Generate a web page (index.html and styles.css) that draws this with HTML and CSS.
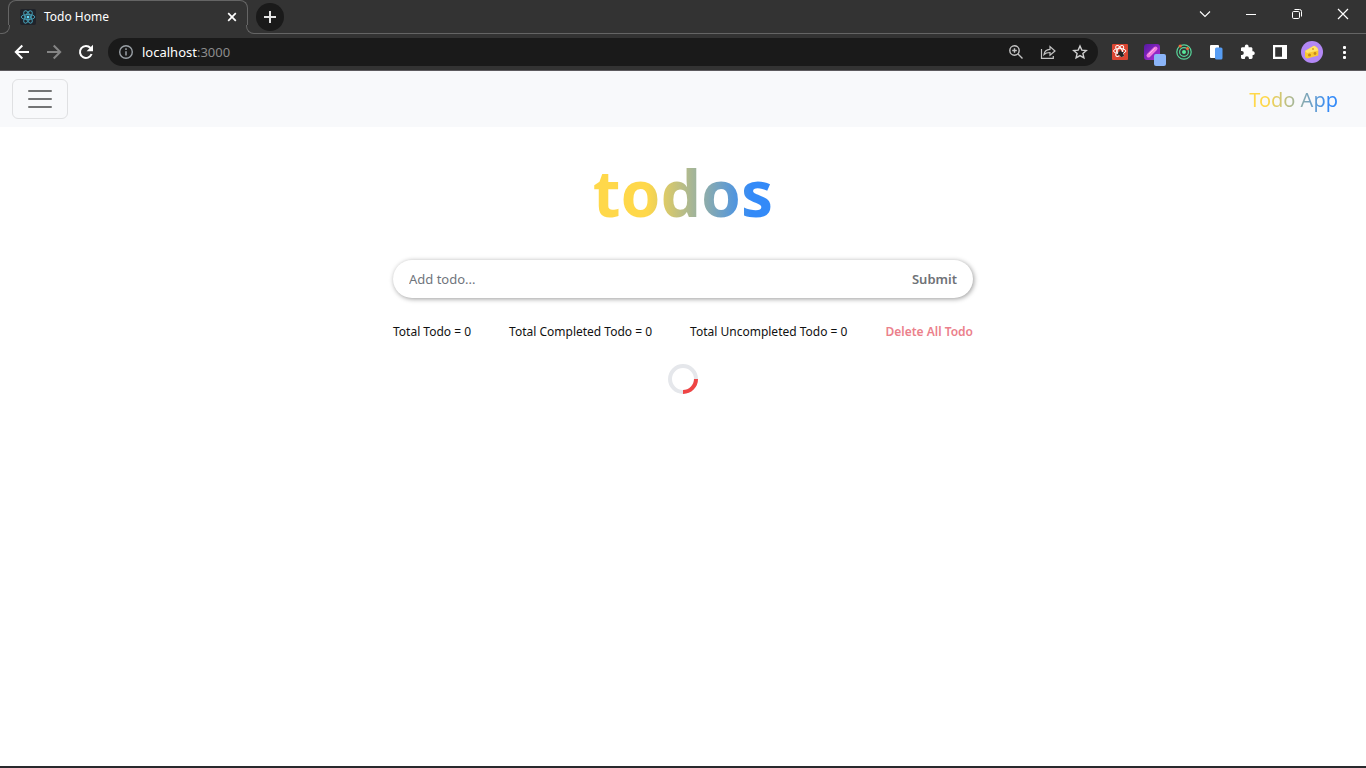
FILE: index.html
```html
<!DOCTYPE html>
<html lang="en">
<head>
<meta charset="utf-8">
<title>Todo Home</title>
<link rel="stylesheet" href="styles.css">
</head>
<body>
<div class="window">
  <header class="browser">
    <div class="tabstrip">
      <div class="tab-lead"></div>
      <div class="tab">
        <svg class="favicon" width="16" height="16" viewBox="0 0 16 16"><rect width="16" height="16" rx="2" fill="#20232a"/><g fill="none" stroke="#459cb3" stroke-width="1"><ellipse cx="8" cy="8" rx="6.8" ry="2.6"/><ellipse cx="8" cy="8" rx="6.8" ry="2.6" transform="rotate(60 8 8)"/><ellipse cx="8" cy="8" rx="6.8" ry="2.6" transform="rotate(120 8 8)"/></g><circle cx="8" cy="8" r="1.5" fill="#61dafb"/></svg>
        <span class="tab-title">Todo Home</span>
        <button class="tab-close" aria-label="Close tab"><svg width="16" height="16" viewBox="0 0 16 16"><path d="M4.2 4.2l7.6 7.6M11.8 4.2l-7.6 7.6" stroke="#fff" stroke-width="1.7"/></svg></button>
      </div>
      <div class="tab-rest">
        <button class="new-tab" aria-label="New tab"><svg width="28" height="28" viewBox="0 0 28 28"><path d="M14 8v12M8 14h12" stroke="#e4e4e4" stroke-width="2"/></svg></button>
        <div class="window-controls">
          <button aria-label="Search tabs"><svg width="46" height="28" viewBox="0 0 46 28"><path d="M18 11.5l5 5 5-5" fill="none" stroke="#fff" stroke-width="1.1"/></svg></button>
          <button aria-label="Minimize"><svg width="46" height="28" viewBox="0 0 46 28"><path d="M18 14.5h10" stroke="#fff"/></svg></button>
          <button aria-label="Restore"><svg width="46" height="28" viewBox="0 0 46 28"><g fill="none" stroke="#fff"><rect x="18.500" y="11.500" width="7" height="7" rx="1.200"/><path d="M20.500 9.500h5a2 2 0 0 1 2 2v5"/></g></svg></button>
          <button aria-label="Close window"><svg width="46" height="28" viewBox="0 0 46 28"><path d="M18 9l10 10M28 9l-10 10" stroke="#fff" stroke-width="1.2"/></svg></button>
        </div>
      </div>
    </div>
    <div class="toolbar">
      <div class="nav">
        <button aria-label="Back"><svg width="16" height="16" viewBox="0 0 16 16"><path d="M15 8H2M8.300 1.500L1.800 8l6.500 6.500" fill="none" stroke="#fff" stroke-width="2"/></svg></button>
        <button aria-label="Forward"><svg width="16" height="16" viewBox="0 0 16 16"><path d="M1 8h13M7.700 1.500L14.200 8l-6.500 6.500" fill="none" stroke="#858585" stroke-width="2"/></svg></button>
        <button aria-label="Reload"><svg width="16" height="16" viewBox="0 0 16 16"><path d="M13.600 10A6 6 0 1 1 12.500 4" fill="none" stroke="#fff" stroke-width="2"/><path d="M15 .8v6.400H8.600z" fill="#fff"/></svg></button>
      </div>
      <div class="address">
        <svg width="16" height="16" viewBox="0 0 16 16"><circle cx="8" cy="8" r="6.300" fill="none" stroke="#9aa0a6" stroke-width="1.400"/><path d="M8 7.200v4.300M8 4.300v1.600" stroke="#9aa0a6" stroke-width="1.500"/></svg>
        <a class="url" href="#">localhost<span class="port">:3000</span></a>
        <div class="page-actions">
          <button aria-label="Zoom"><svg width="16" height="16" viewBox="0 0 16 16"><g fill="none" stroke="#c4c4c4" stroke-width="1.400"><circle cx="6.500" cy="6.500" r="4.700"/><path d="M10 10l4.500 4.500M4.200 6.500h4.600M6.500 4.200v4.600"/></g></svg></button>
          <button aria-label="Share"><svg width="16" height="16" viewBox="0 0 16 16"><g fill="none" stroke="#c4c4c4" stroke-width="1.200"><path d="M1.500 5v9.400h11.800V12"/><path d="M4 10.500c.5-3.500 2.500-5 6-5.200V2.500l5 4.500-5 4.300V8.500c-2.700 0-4.500.5-6 2z"/></g></svg></button>
          <button aria-label="Bookmark"><svg width="16" height="16" viewBox="0 0 16 16"><path d="M8 2l1.800 4.100 4.500.4-3.400 3 1 4.400L8 11.600l-3.900 2.300 1-4.400-3.400-3 4.500-.4z" fill="none" stroke="#d0d0d0" stroke-width="1.400"/></svg></button>
        </div>
      </div>
      <div class="extensions">
        <button aria-label="React tools"><svg width="16" height="16" viewBox="0 0 16 16"><rect width="16" height="16" rx="1" fill="#dc4632"/><g fill="none" stroke="#fff" stroke-width="1"><ellipse cx="7.700" cy="7" rx="6.200" ry="2.500"/><ellipse cx="7.700" cy="7" rx="6.200" ry="2.500" transform="rotate(60 7.700 7)"/><ellipse cx="7.700" cy="7" rx="6.200" ry="2.500" transform="rotate(120 7.700 7)"/></g><ellipse cx="9" cy="10" rx="2.200" ry="3.200" fill="#242424" transform="rotate(-35 9 10)"/><path d="M6 9l6 3M8 6l2 7M5 11l7-3" stroke="#242424"/></svg></button>
        <button aria-label="Color picker"><svg class="overflowing" width="16" height="16" viewBox="0 0 16 16"><defs><linearGradient id="purple" x2="1" y2="1"><stop stop-color="#531aa2"/><stop offset="1" stop-color="#b52bd8"/></linearGradient></defs><rect width="16" height="16" rx="3" fill="url(#purple)"/><path d="M4.500 11.500l7-7" stroke="#f07bdf" stroke-width="4" stroke-linecap="round"/><path d="M5 10l5.500-5.500" stroke="#fbb7ef" stroke-linecap="round"/><rect x="10" y="10" width="12" height="12" rx="2" fill="#8ab4f8"/></svg></button>
        <button aria-label="Radar"><svg width="16" height="16" viewBox="0 0 16 16"><g fill="none" stroke="#58d79b" stroke-width="1.200"><circle cx="8" cy="8" r="7.200"/><circle cx="8" cy="8" r="4.400"/></g><circle cx="8" cy="8" r="2" fill="#58e79b"/><circle cx="4.200" cy="2" r="1.600" fill="#f16a3a"/><circle cx="11.500" cy="4.500" r="1.500" fill="#f16a3a"/></svg></button>
        <button aria-label="Responsive viewer"><svg width="16" height="16" viewBox="0 0 16 16"><rect x="2" y="1" width="9" height="13" rx="1" fill="#fff"/><rect x="7" y="3.500" width="7.500" height="12" rx="1.500" fill="#579df4"/></svg></button>
        <button aria-label="Extensions"><svg width="16" height="16" viewBox="0 0 16 16"><path d="M13.300 7.300h-.9V4.600c0-.8-.6-1.400-1.400-1.400H8.600v-.8a1.900 1.900 0 0 0-3.800 0v.8H2.400C1.600 3.200 1 3.800 1 4.600v2.500h.8a2 2 0 0 1 0 4H1v2.500c0 .8.600 1.400 1.400 1.400h2.500v-.8a2 2 0 0 1 4 0v.8h2.300c.8 0 1.400-.6 1.400-1.400V11h.7a1.900 1.900 0 0 0 0-3.700z" fill="#fff"/></svg></button>
        <button aria-label="Side panel"><svg width="16" height="16" viewBox="0 0 16 16"><path d="M1 1h14v14H1zM3.200 3.200v9.600H10V3.200z" fill="#fff" fill-rule="evenodd"/></svg></button>
        <button aria-label="Profile" class="profile"><svg width="22" height="22" viewBox="0 0 22 22"><circle cx="11" cy="11" r="11" fill="#b388f5"/><path d="M4 10l9-5.200c2 .5 4 2.500 4.300 4.700v5L6 17.500l-2-1.500z" fill="#f9c932"/><path d="M4 10l9-5.200c2 .5 4 2.500 4.300 4.700L6 12z" fill="#ffe36b"/><circle cx="8.500" cy="14" r="1.500" fill="#c78a1b"/><circle cx="14" cy="12.500" r="1.400" fill="#c78a1b"/><circle cx="12" cy="8" r="1" fill="#d9a026"/></svg></button>
        <button aria-label="Menu"><svg width="16" height="16" viewBox="0 0 16 16"><g fill="#fff"><rect x="7" y="2" width="3" height="3" rx="1"/><rect x="7" y="7" width="3" height="3" rx="1"/><rect x="7" y="12" width="3" height="3" rx="1"/></g></svg></button>
      </div>
    </div>
  </header>
  <nav class="navbar">
    <button class="menu-toggle" aria-label="Toggle navigation"><svg width="30" height="30" viewBox="0 0 30 30"><path d="M4 7h22M4 15h22M4 23h22" stroke="#737475" stroke-width="2" stroke-linecap="round"/></svg></button>
    <a class="brand" href="#">Todo App</a>
  </nav>
  <main class="page">
    <h1 class="title">todos</h1>
    <form class="todo-form">
      <input class="todo-input" type="text" placeholder="Add todo..." aria-label="Add todo">
      <button class="submit" type="button">Submit</button>
    </form>
    <div class="stats">
      <span>Total Todo = 0</span>
      <span>Total Completed Todo = 0</span>
      <span>Total Uncompleted Todo = 0</span>
      <button class="delete-all">Delete All Todo</button>
    </div>
    <svg class="spinner" width="30" height="30" viewBox="0 0 30 30" role="img" aria-label="Loading"><circle cx="15" cy="15" r="13" fill="none" stroke="#e5e7eb" stroke-width="4"/><path d="M28 15A13 13 0 0 1 15 28" fill="none" stroke="#ef4444" stroke-width="4"/></svg>
  </main>
</div>
</body>
</html>
```
FILE: styles.css
```css
* { box-sizing: border-box; }
body { margin: 0; font-family: "Noto Sans", "Open Sans", sans-serif; background: #fff; color: #111; }
button { padding: 0; border: 0; background: none; font: inherit; color: inherit; }
svg { display: block; }
a { text-decoration: none; color: inherit; }
.window { min-height: 100vh; display: flex; flex-direction: column; border-bottom: 2px solid #29292d; }
.browser { background: #333; color: #fff; border-bottom: 1px solid #5c5a5e; }

.tabstrip { display: flex; height: 34px; }
.tab-lead { width: 8px; border-bottom: 1px solid #656565; border-bottom-right-radius: 8px; }
.tab { position: relative; display: flex; align-items: center; width: 240px; height: 26px; padding: 6px 7px 0 11px; border: 1px solid #656565; border-bottom: 0; border-radius: 8px 8px 0 0; }
.tab::before, .tab::after { content: ""; position: absolute; bottom: -8px; width: 8px; height: 8px; border-bottom: 1px solid #656565; background: #333; }
.tab::before { left: -8px; border-right: 1px solid #656565; border-bottom-right-radius: 8px; }
.tab::after { right: -8px; border-left: 1px solid #656565; border-bottom-left-radius: 8px; }
.tab-title { flex: 1; padding-left: 8px; font-size: 12px; line-height: 16px; }
.tab-rest { flex: 1; display: flex; align-items: flex-start; padding-top: 3px; padding-left: 8px; border-bottom: 1px solid #656565; border-bottom-left-radius: 8px; }
.new-tab { border-radius: 50%; background: #1a1a1a; }
.window-controls { display: flex; margin-left: auto; margin-top: -3px; }

.toolbar { display: flex; align-items: center; height: 36px; padding-right: 14px; }
.nav { display: flex; gap: 16px; padding: 0 14px; }
.address { flex: 1; display: flex; align-items: center; height: 28px; padding: 0 10px; border-radius: 14px; background: #1a1a1a; }
.url { padding-left: 8px; font-size: 13px; line-height: 18px; }
.port { color: #8c8c8c; }
.page-actions { display: flex; gap: 16px; margin-left: auto; }
.extensions { display: flex; align-items: center; gap: 16px; padding-left: 14px; }
.overflowing { overflow: visible; }
.profile { margin: 0 -3px; }

.navbar { display: flex; align-items: center; justify-content: space-between; min-height: 56px; padding: 8px 28px 8px 12px; background: #f8f9fb; }
.menu-toggle { width: 56px; height: 40px; padding: 4px 12px; border: 1px solid #dfe0e2; border-radius: 6px; }
.brand { padding-top: 2px; font-size: 20px; line-height: 30px; background: linear-gradient(90deg, #ffd84a 20%, #338af8 90%); background-clip: text; color: transparent; }

.page { flex: 1; display: flex; flex-direction: column; align-items: center; padding: 24px 16px; }
.title { margin: 0; font-size: 64px; line-height: 84px; font-weight: 700; background: linear-gradient(90deg, #ffd84a 30%, #338af8 88%); background-clip: text; color: transparent; }
.todo-form { display: flex; align-items: center; width: 100%; max-width: 580px; height: 38px; margin-top: 25px; padding: 0 16px; border-radius: 19px; background: #fff; box-shadow: 1px 1px 5px rgba(0, 0, 0, .4); }
.todo-input { flex: 1; min-width: 0; padding: 0; border: 0; outline: 0; background: none; font: 13px/20px "Noto Sans", sans-serif; }
.todo-input::placeholder { color: #6f757c; opacity: 1; }
.submit { font-size: 13px; line-height: 20px; font-weight: 600; color: #6f7276; }
.stats { display: flex; flex-wrap: wrap; justify-content: space-between; width: 100%; max-width: 580px; margin-top: 24px; font-size: 12px; line-height: 20px; }
.delete-all { font-weight: 600; color: #eb808b; }
.spinner { margin-top: 22px; }
```
